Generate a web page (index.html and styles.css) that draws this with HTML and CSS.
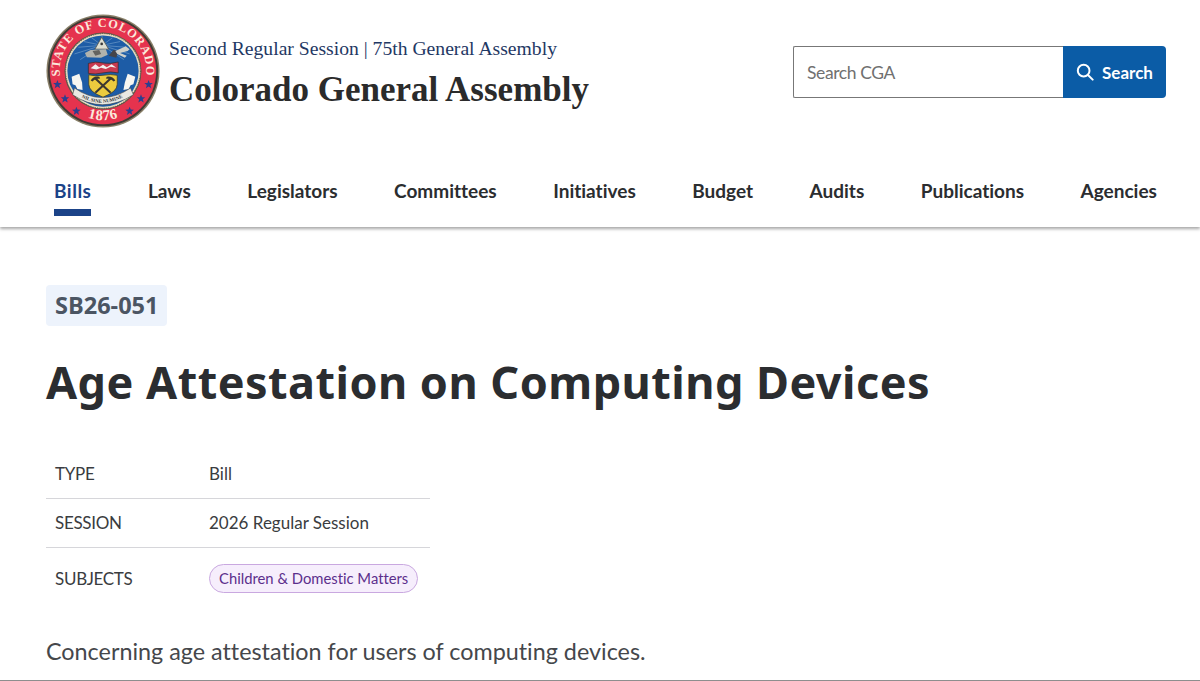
FILE: index.html
```html
<!DOCTYPE html>
<html lang="en">
<head>
<meta charset="utf-8">
<title>SB26-051 | Colorado General Assembly</title>
<link rel="stylesheet" href="styles.css">
</head>
<body>
<header class="site-header">
  <div class="brand-row">
    <a class="brand" href="#">
      <svg class="seal" viewBox="0 0 120 120" aria-hidden="true">
        <defs>
          <path id="arc-top" d="M15 66 A45.500 45.500 0 1 1 105 66"/>
          <path id="arc-bottom" d="M20 93 A52 52 0 0 0 100 93"/>
          <path id="star" d="M0-4.500 1.200-1.400 4.500-1.300 1.900.8 2.800 4.200 0 2.200-2.800 4.200-1.900.8-4.500-1.300-1.200-1.400z"/>
          <path id="arc-motto" d="M31 84 Q59 103 87 84"/>
        </defs>
        <circle cx="60" cy="60" r="59.500" fill="#8a8069"/>
        <circle cx="60" cy="60" r="58" fill="#3f3b35"/>
        <circle cx="60" cy="60" r="56" fill="#e5334e"/>
        <circle cx="60" cy="60" r="40.500" fill="#5a5346"/>
        <circle cx="60" cy="60" r="39.500" fill="#e4dcc0"/>
        <circle cx="60" cy="60" r="39.500" fill="none" stroke="#6b6350" stroke-width="1.300" stroke-dasharray="1.200 1.200"/>
        <circle cx="60" cy="60" r="37.500" fill="#1d5ca6"/>
        <g class="seal-rays">
          <path d="M59 33 59 23M59 33 48 25M59 33 70 25M59 33 40 29M59 33 78 29M59 33 34 35M59 33 84 35M59 33 30 42M59 33 88 42M59 33 36 48M59 33 82 48"/>
        </g>
        <text class="seal-ring" font-size="13" letter-spacing=".8" fill="#fbe9dc"><textPath href="#arc-top" startOffset="50%" text-anchor="middle">STATE OF COLORADO</textPath></text>
        <text class="seal-ring" font-size="15.500" letter-spacing=".5" fill="#fbe9dc"><textPath href="#arc-bottom" startOffset="50%" text-anchor="middle">1876</textPath></text>
        <g fill="#2b3f8f">
          <use href="#star" x="12" y="74"/>
          <use href="#star" x="108" y="74"/>
          <use href="#star" x="20" y="89"/>
          <use href="#star" x="100" y="89"/>
          <use href="#star" x="32" y="102"/>
          <use href="#star" x="88" y="102"/>
        </g>
        <path d="M58.600 24.500 66 37H51.500z" fill="#dedfd2" stroke="#4f5048" stroke-width=".8"/>
        <circle cx="58.600" cy="31.500" r="1.400" fill="#3a3a3a"/>
        <path d="M41 41 47 38 63 37 65 43 58 46 43 45.500z" fill="#b2b3ad"/>
        <path d="M49 39 56 38 58 42 52 44z" fill="#63635f"/>
        <path d="M66 44 71 38 76 39 74 46z" fill="#45454a"/>
        <path d="M73 39 84 34 88 37 86 39 78 41 85 44 83 46 75 42z" fill="#cfd0ca"/>
        <path d="M44.600 52Q52 49.500 60 51.500 68 53 76 50.500V62Q68 60 60 62 52 64 44.600 62.500z" fill="#c93a4f" stroke="#2a2a2a" stroke-width=".7"/>
        <path d="M47 57 52 53 56 56 60 53.500 64 56 69 53 74 56.500 68 55.500 63 58 58 56.500 53 58.500z" fill="#f3f1ee"/>
        <path d="M45 64Q52 66 60 64.500 68 63 75 64.500V74Q75 82 60 87.500 45 82 45 74z" fill="#eccb3e" stroke="#3a3a2a" stroke-width=".8"/>
        <path d="M52 68 68 83M68 68 52 83" stroke="#3b3830" stroke-width="2.200"/>
        <path d="M47 70Q50 65 56 66L57 68Q52 68 49 71zM73 70Q70 65 64 66L63 68Q68 68 71 71z" fill="#3b3830"/>
        <path d="M27 66 35 63 38 72 38.500 80 33 79 31 75 28 74z" fill="#f6f6f1"/>
        <path d="M94 66 86 63 83 72 81.500 80 87 79 89 75 92 74z" fill="#f6f6f1"/>
        <path d="M30 78Q59 98 89 78L92 85Q59 106 28 85z" fill="#e9e9e3" stroke="#3a3a3a" stroke-width=".6"/>
        <text class="seal-motto" font-size="5.200" fill="#333"><textPath href="#arc-motto" startOffset="50%" text-anchor="middle">NIL SINE NUMINE</textPath></text>
      </svg>
      <span class="brand-text">
        <span class="brand-session">Second Regular Session | 75th General Assembly</span>
        <span class="brand-name">Colorado General Assembly</span>
      </span>
    </a>
    <form class="search">
      <input class="search-input" type="text" placeholder="Search CGA">
      <button class="search-button" type="button">
        <svg class="search-icon" viewBox="0 0 20 20" aria-hidden="true"><circle cx="8.500" cy="8.500" r="6.500"/><path d="M13.300 13.300 18.500 18.500"/></svg>
        Search
      </button>
    </form>
  </div>
  <nav class="main-nav">
    <a class="nav-item is-active" href="#">Bills</a>
    <a class="nav-item" href="#">Laws</a>
    <a class="nav-item" href="#">Legislators</a>
    <a class="nav-item" href="#">Committees</a>
    <a class="nav-item" href="#">Initiatives</a>
    <a class="nav-item" href="#">Budget</a>
    <a class="nav-item" href="#">Audits</a>
    <a class="nav-item" href="#">Publications</a>
    <a class="nav-item" href="#">Agencies</a>
  </nav>
</header>
<main class="content">
  <span class="bill-id">SB26-051</span>
  <h1 class="bill-title">Age Attestation on Computing Devices</h1>
  <table class="meta">
    <tr><th>TYPE</th><td>Bill</td></tr>
    <tr><th>SESSION</th><td>2026 Regular Session</td></tr>
    <tr><th>SUBJECTS</th><td><span class="pill">Children &amp; Domestic Matters</span></td></tr>
  </table>
  <p class="summary">Concerning age attestation for users of computing devices.</p>
</main>
</body>
</html>
```
FILE: styles.css
```css
* { box-sizing: border-box; }
html, body { margin: 0; height: 681px; overflow: hidden; }
body {
  background: #fff;
  font-family: "Lato", "Noto Sans", sans-serif;
  font-variant-ligatures: none;
  color: #2b2d30;
  position: relative;
}
body::after {
  content: "";
  position: absolute;
  left: 0; right: 0; bottom: 0;
  height: 1px;
  background: #8e8e8e;
}
a { color: inherit; text-decoration: none; }

.site-header {
  height: 227px;
  box-shadow: 0 2px 3px rgba(0,0,0,.35);
  padding: 0 34px 0 46px;
  display: flex;
  flex-direction: column;
}
.brand-row {
  display: flex;
  justify-content: space-between;
  height: 146px;
}
.brand { display: flex; gap: 9px; padding-top: 14px; }
.seal { width: 114px; height: 114px; }
.seal-ring { font-family: "Liberation Serif", serif; font-weight: 700; }
.seal-motto { font-family: "Liberation Serif", serif; font-weight: 700; }
.seal-rays path { stroke: #7fa8d0; stroke-width: .6; fill: none; }
.brand-text { display: flex; flex-direction: column; font-family: "Liberation Serif", serif; padding-top: 22px; }
.brand-session { font-size: 19.650px; line-height: 24px; color: #1f3864; white-space: nowrap; }
.brand-name { font-size: 35px; line-height: 42px; font-weight: 700; margin-top: 9px; color: #2b2b2b; white-space: nowrap; }

.search { display: flex; margin-top: 46px; height: 52px; }
.search-input {
  width: 270px;
  border: 1.500px solid #777;
  border-right: 0;
  padding: 1px 13px 0;
  font: 17.500px "Lato", sans-serif;
  letter-spacing: -.4px;
  color: #333;
  outline: 0;
  border-radius: 2px 0 0 2px;
}
.search-input::placeholder { color: #707070; opacity: 1; }
.search-button {
  width: 103px;
  border: 0;
  background: #0b5ca6;
  color: #fff;
  border-radius: 0 4px 4px 0;
  font: 700 17px "Lato", sans-serif;
  display: flex;
  align-items: center;
  justify-content: center;
  gap: 8px;
  padding: 0;
}
.search-icon { width: 18px; height: 18px; fill: none; stroke: #fff; stroke-width: 2.200; stroke-linecap: round; }

.main-nav {
  display: flex;
  justify-content: space-between;
  padding: 0 9px 0 8px;
  flex: 1;
}
.nav-item {
  font-size: 19px;
  font-weight: 700;
  line-height: 24px;
  padding-top: 33px;
  height: 70px;
  color: #2b2d30;
  position: relative;
}
.nav-item.is-active { color: #1b4388; letter-spacing: .5px; }
.nav-item.is-active::after {
  content: "";
  position: absolute;
  left: 0; right: 0;
  top: 63px;
  height: 7px;
  background: #1b4388;
}

.content { padding: 58px 46px 0; }
.bill-id {
  display: inline-block;
  height: 41px;
  padding: 0 9px;
  background: #edf3fc;
  border-radius: 4px;
  font: 700 23.500px/41px "Open Sans", sans-serif;
  color: #4b5563;
}
.bill-title {
  margin: 29px 0 0;
  font: 700 45px/54px "Noto Sans", sans-serif;
  color: #2b2d30;
  letter-spacing: .47px;
}
.meta {
  margin-top: 40px;
  width: 384px;
  table-layout: fixed;
  border-collapse: collapse;
  font-size: 17px;
}
.meta th, .meta td { padding: 0 0 0 9px; height: 49px; font-weight: 400; text-align: left; color: #3a3c40; border-bottom: 1.500px solid #d6d6da; white-space: nowrap; }
.meta th { width: 163px; font-size: 17px; letter-spacing: -.3px; }
.meta td { padding-left: 0; }
.meta tr:last-child th, .meta tr:last-child td { border-bottom: 0; height: 62px; }
.pill {
  display: inline-block;
  height: 29px;
  padding: 0 9px;
  border: 1px solid #c9a8e0;
  border-radius: 15px;
  background: #f6eefc;
  color: #5c2f8c;
  font-size: 14.800px;
  line-height: 27px;
}
.summary {
  margin: 27px 0 0;
  font-size: 23.350px;
  line-height: 30px;
  color: #45474b;
}
```
